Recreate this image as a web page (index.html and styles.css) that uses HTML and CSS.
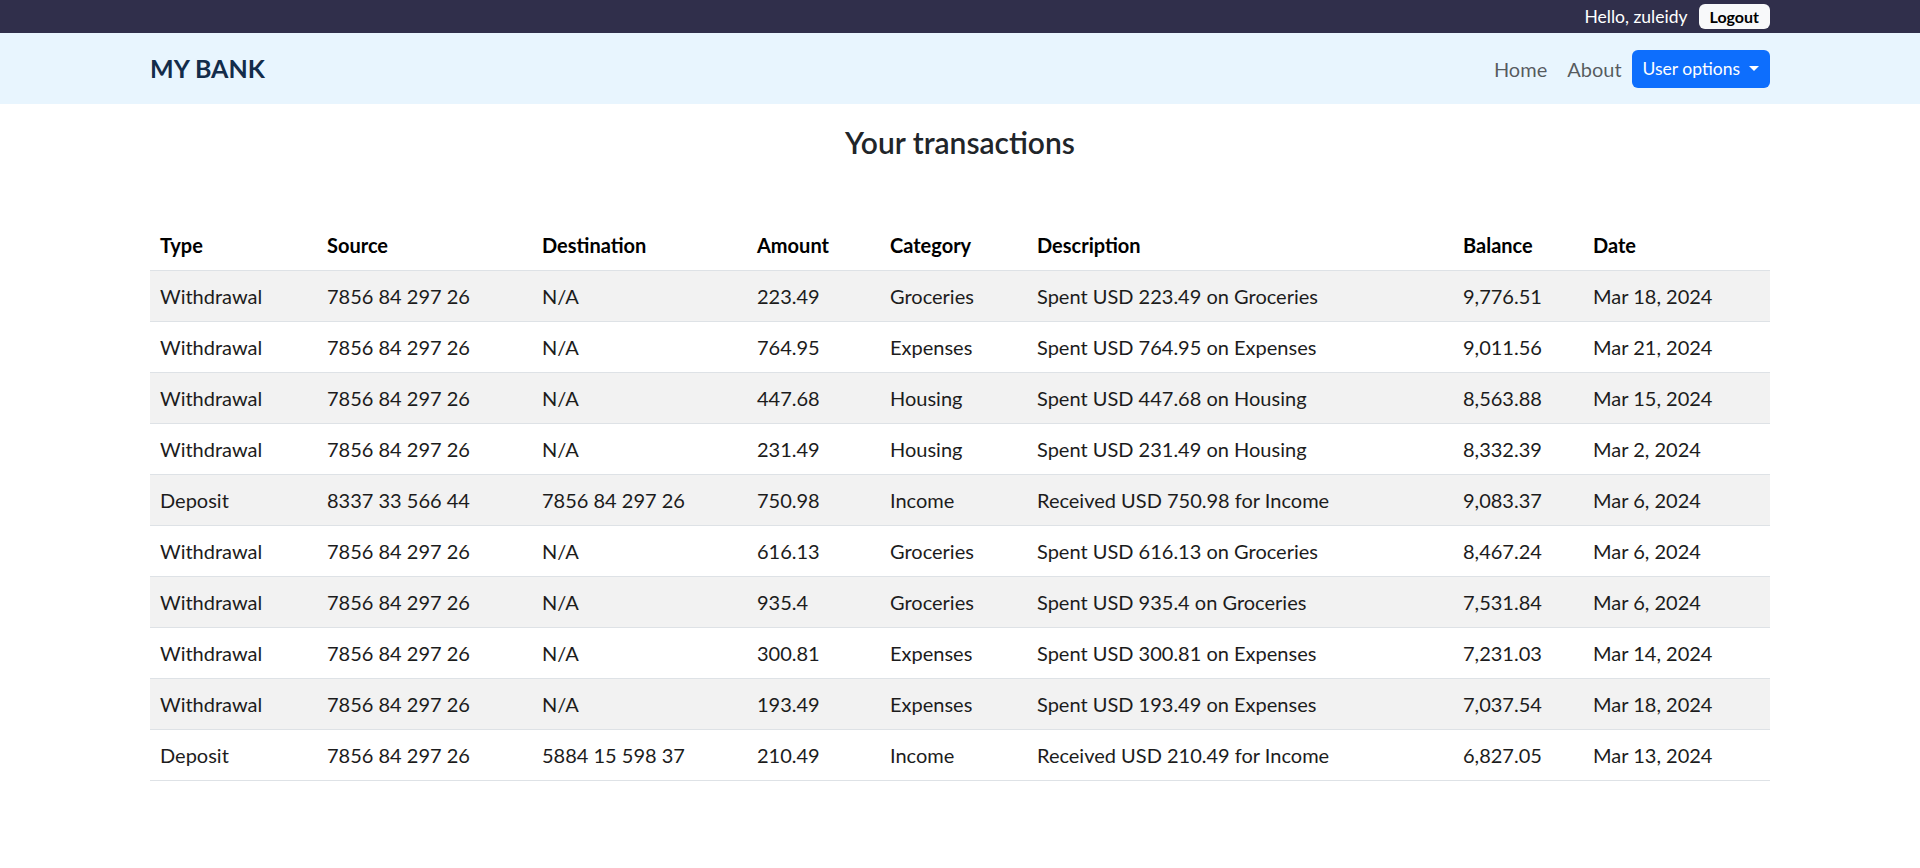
FILE: index.html
```html
<!doctype html>
<html lang="en">
  <head>
    <meta charset="UTF-8">
    <meta name="viewport" content="width=device-width, initial-scale=1.0">
    <title>My Bank - Transactions</title>
    <link rel="stylesheet" href="styles.css">
  </head>
  <body>

    <!-- user bar -->
    <div class="topbar">
      <div class="container topbar-inner">
        <span class="greeting">Hello, zuleidy</span>
        <button class="btn-logout">Logout</button>
      </div>
    </div>

    <nav class="navbar">
      <div class="container navbar-inner">
        <a class="brand" href="#">MY BANK</a>
        <ul class="nav">
          <li><a class="nav-link" href="#">Home</a></li>
          <li><a class="nav-link" href="#">About</a></li>
          <li><button class="btn-options">User options</button></li>
        </ul>
      </div>
    </nav>

    <main class="container">
      <h4 class="page-title">Your transactions</h4>

      <table class="transactions">
        <colgroup>
          <col class="col-type">
          <col class="col-source">
          <col class="col-dest">
          <col class="col-amount">
          <col class="col-category">
          <col class="col-desc">
          <col class="col-balance">
          <col class="col-date">
        </colgroup>
        <thead>
          <tr>
            <th>Type</th>
            <th>Source</th>
            <th>Destination</th>
            <th>Amount</th>
            <th>Category</th>
            <th>Description</th>
            <th>Balance</th>
            <th>Date</th>
          </tr>
        </thead>
        <tbody>
          <tr>
            <td>Withdrawal</td><td>7856 84 297 26</td><td>N/A</td><td>223.49</td><td>Groceries</td><td>Spent USD 223.49 on Groceries</td><td>9,776.51</td><td>Mar 18, 2024</td>
          </tr>
          <tr>
            <td>Withdrawal</td><td>7856 84 297 26</td><td>N/A</td><td>764.95</td><td>Expenses</td><td>Spent USD 764.95 on Expenses</td><td>9,011.56</td><td>Mar 21, 2024</td>
          </tr>
          <tr>
            <td>Withdrawal</td><td>7856 84 297 26</td><td>N/A</td><td>447.68</td><td>Housing</td><td>Spent USD 447.68 on Housing</td><td>8,563.88</td><td>Mar 15, 2024</td>
          </tr>
          <tr>
            <td>Withdrawal</td><td>7856 84 297 26</td><td>N/A</td><td>231.49</td><td>Housing</td><td>Spent USD 231.49 on Housing</td><td>8,332.39</td><td>Mar 2, 2024</td>
          </tr>
          <tr>
            <td>Deposit</td><td>8337 33 566 44</td><td>7856 84 297 26</td><td>750.98</td><td>Income</td><td>Received USD 750.98 for Income</td><td>9,083.37</td><td>Mar 6, 2024</td>
          </tr>
          <tr>
            <td>Withdrawal</td><td>7856 84 297 26</td><td>N/A</td><td>616.13</td><td>Groceries</td><td>Spent USD 616.13 on Groceries</td><td>8,467.24</td><td>Mar 6, 2024</td>
          </tr>
          <tr>
            <td>Withdrawal</td><td>7856 84 297 26</td><td>N/A</td><td>935.4</td><td>Groceries</td><td>Spent USD 935.4 on Groceries</td><td>7,531.84</td><td>Mar 6, 2024</td>
          </tr>
          <tr>
            <td>Withdrawal</td><td>7856 84 297 26</td><td>N/A</td><td>300.81</td><td>Expenses</td><td>Spent USD 300.81 on Expenses</td><td>7,231.03</td><td>Mar 14, 2024</td>
          </tr>
          <tr>
            <td>Withdrawal</td><td>7856 84 297 26</td><td>N/A</td><td>193.49</td><td>Expenses</td><td>Spent USD 193.49 on Expenses</td><td>7,037.54</td><td>Mar 18, 2024</td>
          </tr>
          <tr>
            <td>Deposit</td><td>7856 84 297 26</td><td>5884 15 598 37</td><td>210.49</td><td>Income</td><td>Received USD 210.49 for Income</td><td>6,827.05</td><td>Mar 13, 2024</td>
          </tr>
        </tbody>
      </table>
    </main>

  </body>
</html>
```

FILE: styles.css
```css
* {
  box-sizing: border-box;
}

body {
  margin: 0;
  font-family: "Segoe UI", Lato, "Open Sans", sans-serif;
  font-size: 20px;
  line-height: 1.5;
  color: #212529;
  background: #fff;
}

.container {
  width: 1650px;
  margin: 0 auto;
  padding: 0 15px;
}

/* top user bar */
.topbar {
  background: #302f4b;
  height: 33px;
}

.topbar-inner {
  height: 100%;
  display: flex;
  justify-content: flex-end;
  align-items: center;
  gap: 11px;
}

.greeting {
  color: #fff;
  font-size: 17.5px;
  line-height: 1;
}

.btn-logout {
  font-family: inherit;
  font-size: 16px;
  font-weight: 700;
  line-height: 19px;
  color: #000;
  background: #f8f9fa;
  border: 0;
  border-radius: 6px;
  padding: 3px 11px;
  cursor: pointer;
}

/* navbar */
.navbar {
  background: #e8f5fe;
  height: 71px;
}

.navbar-inner {
  height: 100%;
  display: flex;
  justify-content: space-between;
  align-items: center;
}

.brand {
  color: #132c4a;
  font-size: 25px;
  font-weight: 700;
  text-decoration: none;
}

.nav {
  list-style: none;
  margin: 0;
  padding: 0;
  display: flex;
  align-items: center;
}

.nav-link {
  display: block;
  padding: 0 10px;
  color: rgba(0, 0, 0, .65);
  text-decoration: none;
}

.btn-options {
  font-family: inherit;
  font-size: 17.5px;
  line-height: 26px;
  color: #fff;
  background: #0d6efd;
  border: 0;
  border-radius: 6px;
  padding: 6px 11px;
  height: 38px;
  display: flex;
  align-items: center;
  cursor: pointer;
}

.btn-options::after {
  content: "";
  margin-left: 9px;
  border-top: 5px solid #fff;
  border-left: 5px solid transparent;
  border-right: 5px solid transparent;
}

/* page */
.page-title {
  margin: 20px 0 60px;
  font-size: 30px;
  font-weight: 600;
  line-height: 36px;
  text-align: center;
  color: #212529;
}

.transactions {
  width: 100%;
  border-collapse: collapse;
  table-layout: fixed;
}

.col-type { width: 167px; }
.col-source { width: 215px; }
.col-dest { width: 215px; }
.col-amount { width: 133px; }
.col-category { width: 147px; }
.col-desc { width: 426px; }
.col-balance { width: 130px; }
.col-date { width: 187px; }

.transactions th,
.transactions td {
  padding: 10px;
  line-height: 30px;
  text-align: left;
  border-bottom: 1px solid #dee2e6;
  white-space: nowrap;
}

.transactions th {
  font-weight: 700;
  color: #000;
}

.transactions td {
  color: #1c1c1c;
}

.transactions tbody tr:nth-child(odd) {
  background: #f2f2f2;
}
```
